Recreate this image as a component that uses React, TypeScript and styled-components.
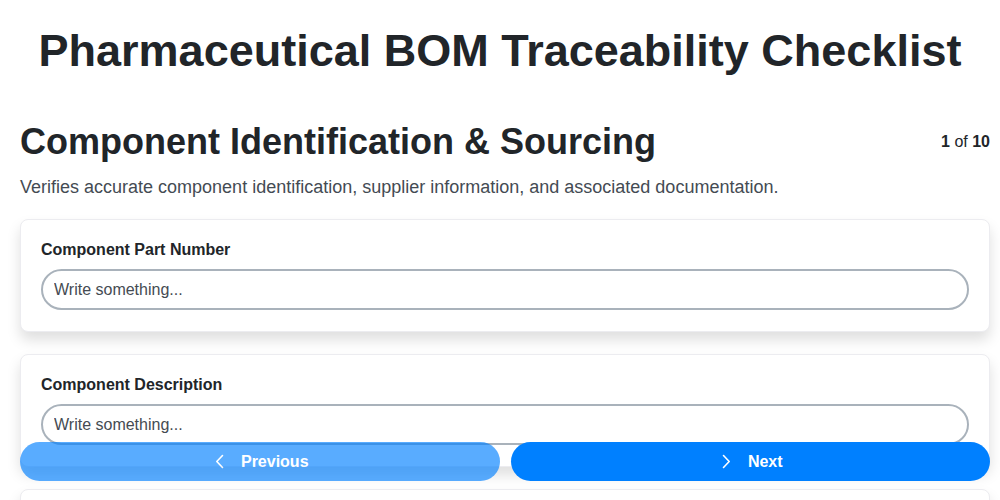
import React from "react";
import styled, { createGlobalStyle } from "styled-components";

const Global = createGlobalStyle`
  html, body { margin: 0; padding: 0; background: #fff; }
  body { font-family: "Liberation Sans", Arial, sans-serif; color: #212529; }
  * { box-sizing: border-box; }
`;

const Page = styled.div`
  padding: 0 10px 80px 20px;
`;

const Title = styled.h1`
  margin: 26px 0 0;
  text-align: center;
  font-size: 45px;
  line-height: 50px;
  font-weight: 700;
  color: #212529;
`;

const SectionHeader = styled.div`
  display: flex;
  justify-content: space-between;
  align-items: center;
  margin-top: 45px;
`;

const SectionTitle = styled.h2`
  margin: 0;
  font-size: 36px;
  line-height: 42px;
  font-weight: 700;
  color: #212529;
`;

const Counter = styled.div`
  font-size: 16px;
  color: #212529;
  b { font-weight: 700; }
`;

const Description = styled.p`
  margin: 12px 0 20px;
  font-size: 18px;
  line-height: 24px;
  color: #444b53;
`;

const Cards = styled.div`
  display: flex;
  flex-direction: column;
  gap: 22px;
`;

const Card = styled.div`
  background: #fff;
  border: 1px solid #ececf0;
  border-radius: 8px;
  padding: 20px 20px 21px;
  box-shadow: 0 8px 14px rgba(0, 0, 0, 0.13);
`;

const Label = styled.label`
  display: block;
  font-size: 16px;
  font-weight: 700;
  line-height: 19px;
  color: #212529;
  margin-bottom: 10px;
`;

const Input = styled.input`
  display: block;
  width: 100%;
  height: 41px;
  border: 2px solid #a9b2bb;
  border-radius: 21px;
  padding: 0 11px;
  font-family: "Liberation Sans", Arial, sans-serif;
  font-size: 16px;
  color: #212529;
  background: #fff;
  outline: none;
  &::placeholder { color: #454b52; }
`;

const NavBar = styled.div`
  position: fixed;
  left: 20px;
  right: 10px;
  bottom: 19px;
  display: grid;
  grid-template-columns: 1fr 1fr;
  gap: 11px;
`;

const NavButton = styled.button<{ $disabled?: boolean }>`
  height: 39px;
  border: none;
  border-radius: 20px;
  background: #0080ff;
  color: #fff;
  font-family: "Liberation Sans", Arial, sans-serif;
  font-size: 16px;
  font-weight: 700;
  display: flex;
  align-items: center;
  justify-content: center;
  gap: 17px;
  padding: 0 0 0 4px;
  opacity: ${(p) => (p.$disabled ? 0.65 : 1)};
  cursor: pointer;
`;

const Chevron = ({ dir }: { dir: "left" | "right" }) => (
  <svg width="9" height="15" viewBox="0 0 9 15" fill="none">
    <path
      d={dir === "left" ? "M7.5 1.5 L1.8 7.5 L7.5 13.5" : "M1.5 1.5 L7.2 7.5 L1.5 13.5"}
      stroke="#fff"
      strokeWidth="1.6"
      strokeLinecap="round"
      strokeLinejoin="round"
    />
  </svg>
);

const fields = ["Component Part Number", "Component Description", "Supplier Name"];

export default function App() {
  return (
    <>
      <Global />
      <Title>Pharmaceutical BOM Traceability Checklist</Title>
      <Page>
        <SectionHeader>
          <SectionTitle>Component Identification &amp; Sourcing</SectionTitle>
          <Counter>
            <b>1</b> of <b>10</b>
          </Counter>
        </SectionHeader>
        <Description>
          Verifies accurate component identification, supplier information, and associated documentation.
        </Description>
        <Cards>
          {fields.map((f) => (
            <Card key={f}>
              <Label>{f}</Label>
              <Input placeholder="Write something..." />
            </Card>
          ))}
        </Cards>
      </Page>
      <NavBar>
        <NavButton $disabled>
          <Chevron dir="left" />
          Previous
        </NavButton>
        <NavButton>
          <Chevron dir="right" />
          Next
        </NavButton>
      </NavBar>
    </>
  );
}
